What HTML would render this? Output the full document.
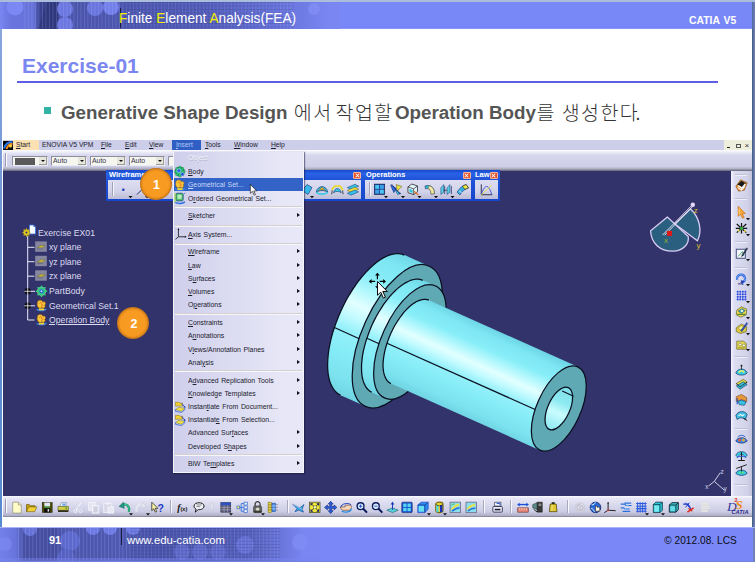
<!DOCTYPE html>
<html lang="ko">
<head>
<meta charset="utf-8">
<title>Exercise-01</title>
<style>
*{box-sizing:border-box;margin:0;padding:0}
html,body{width:755px;height:562px;overflow:hidden;background:#fff}
body{position:relative;font-family:"Liberation Sans","Noto Sans CJK KR",sans-serif}
.abs{position:absolute}
.t{white-space:nowrap}
#topstrip{left:0;top:0;width:755px;height:2px;background:#abbddc}
#hdr{left:0;top:2px;width:755px;height:27px;background:linear-gradient(#7988f7 24px,#7482f4 26px,#a0aaf8);overflow:hidden}
#hdrtxt{left:118.5px;top:9.7px;font-size:14.6px;color:#fff;line-height:16px;transform:scaleX(.937);transform-origin:0 50%}
#hdrtxt b{font-weight:normal;color:#f4f000}
#hdrbar{left:120px;top:8px;width:1px;height:20px;background:#1a1a40}
#catia5{left:689px;top:15.1px;font-size:10.4px;font-weight:bold;color:#fff;line-height:12px;word-spacing:1px}
#lstrip{left:0;top:0;width:2px;height:562px;background:linear-gradient(#a9b8d8 29px,#88a6dc 30px,#7a9cd8 140px,#6090d2 300px,#588ad0 527px,#7a8ad8 528px)}
#rstrip{left:752px;top:29px;width:3px;height:499px;background:linear-gradient(90deg,#465a8a,#5c74a0 60%,#7890b8)}
#rstrip2{left:753px;top:528px;width:2px;height:34px;background:#7080b8}
#rstrip3{left:752px;top:2px;width:3px;height:27px;background:linear-gradient(90deg,#5468a0,#6c82b4)}
#bstrip{left:0;top:560.5px;width:755px;height:1.5px;background:#7082da}
#title{left:22px;top:54px;font-size:21px;font-weight:bold;color:#7b86f0;line-height:24px}
#rule{left:17px;top:80.5px;width:701px;height:2px;background:#5d5de6}
#bullet{left:44px;top:107px;width:7px;height:7px;background:#33b3a6}
.l1{top:100.6px;font-size:18.8px;color:#3a3a3a;line-height:24px}
.l1 b{color:#555}
.ko{font-weight:300;color:#333;font-size:19.5px;letter-spacing:1.45px}
#ftr{left:0;top:527px;width:755px;height:35px;background:linear-gradient(#c4caf8,#7988f6 1.5px,#7988f6);overflow:hidden}
#pg{left:49px;top:534px;font-size:11px;font-weight:bold;color:#fff;line-height:13px}
#ftrbar{left:121px;top:528px;width:1px;height:17px;background:#1a1a40}
#url{left:127px;top:533.5px;font-size:11.3px;color:#fff;line-height:13px}
#copy{left:664.2px;top:535.4px;font-size:10.1px;color:#0c0c14;line-height:11px;letter-spacing:.05px}
</style>
<style>
/* CATIA window */
#vp{left:3px;top:171px;width:749px;height:325px;background:#33336b}
#mbar{left:3px;top:140px;width:749px;height:10px;background:#cdcee9}
#tbar{left:3px;top:150px;width:749px;height:21px;background:linear-gradient(#fdfdff,#ededf9 10%,#d6d6ed 26%,#cfcfe8 78%,#b4b4c8 88%,#8a8a9c 95%,#60607a)}
.mi{top:140px;height:10px;line-height:10px;font-size:7.8px;color:#1c1c2c;transform:scaleX(.86);transform-origin:0 50%}
.mi u{text-decoration-thickness:1px;text-underline-offset:0.5px}
#start{left:13px;top:140px;width:26px;height:10px;background:#fbe0b2}
#ins{left:172px;top:140px;width:29px;height:10px;background:#2f5fc4}
#logo{left:3px;top:141px;width:10px;height:9px;background:#05050c;overflow:hidden}
</style>
<style>
#menu{left:173px;top:151px;width:131px;height:322px;background:linear-gradient(90deg,#cfcfec,#dcdcf2 45%,#e7e7f7 85%);border:1px solid #f4f4fb;border-top-color:#e4e4f4;box-shadow:1px 1px 1px rgba(20,20,60,.5)}
#mhl{left:174px;top:178px;width:129px;height:13px;background:#3363c6}
.msep{left:175px;width:127px;height:2px;background:linear-gradient(#d4d0cc 50%,#f6f6fc 50%)}
.mt{left:187.6px;height:13px;line-height:13px;font-size:8px;color:#20202c;transform:scaleX(.858);transform-origin:0 50%;word-spacing:.8px}
.mt u{text-decoration-thickness:1px;text-underline-offset:0.5px}
.mt.hl{color:#c9d6f6}
.mt.dis{color:#f3f3fa;text-shadow:0.5px 0.5px 0 #b4b4cc}
.marr{left:297px;width:0;height:0;border-left:3px solid #101018;border-top:2.5px solid transparent;border-bottom:2.5px solid transparent}
</style>
<style>
.cb{top:156px;height:10px;background:#f6f6f0;border:1px solid #8e8e9c;border-right-color:#e8e8f0;border-bottom-color:#ececf4}
.cbb{top:157px;width:8px;height:8px;background:#e6e6dc;border-right:1px solid #9c9c94;border-bottom:1px solid #9c9c94}
.cbb:after{content:"";position:absolute;left:2px;top:3px;border-top:2.5px solid #111;border-left:2px solid transparent;border-right:2px solid transparent}
.cbt{top:156px;height:10px;line-height:10px;font-size:7.8px;color:#33334a;transform:scaleX(.88);transform-origin:0 50%}
.ftb{top:170px;height:31px;background:linear-gradient(#1748cf,#2a62e6 12%,#1f53d8 30%,#1646cc)}
.fbody{top:180px;height:19px;background:linear-gradient(#dedef2,#d2d2ea 60%,#bcbcd6)}
.ftt{top:170px;height:10px;line-height:10px;font-size:8px;font-weight:bold;color:#fff;transform:scaleX(.93);transform-origin:0 50%}
.fx{top:172px;width:8px;height:7px;background:#e2532c;border:1px solid #f6b49c;border-radius:1px}
.fx:before,.fx:after{content:"";position:absolute;left:0.5px;top:2px;width:5px;height:1px;background:#fff;transform:rotate(45deg)}
.fx:after{transform:rotate(-45deg)}
.tr{left:49px;height:12px;line-height:12px;font-size:9.3px;color:#dcdcf0;transform:scaleX(.935);transform-origin:0 50%}
.num{width:32px;height:32px;border-radius:50%;background:radial-gradient(circle closest-side,#f89c24 0,#f79a22 80%,#e68c1c 88%,#cc7a18 96%,#b86e1a 100%);color:#fff;font-weight:bold;font-size:12.5px;line-height:35.4px;text-align:center;padding-left:2px}
</style>
</head>
<body>
<div class="abs" id="topstrip"></div>
<div class="abs" id="hdr"></div>
<div class="abs" id="lstrip"></div>
<div class="abs" id="rstrip"></div>
<div class="abs" id="ftr"></div>
<svg class="abs" style="left:0;top:2px" width="340" height="27" viewBox="0 0 340 27">
<defs>
<linearGradient id="hg" x1="0" x2="1" y1="0" y2="0">
<stop offset="0" stop-color="#7a86f2"/><stop offset=".03" stop-color="#6a76de"/><stop offset=".10" stop-color="#6672d8"/><stop offset=".115" stop-color="#3a4492"/><stop offset=".165" stop-color="#343c84"/><stop offset=".18" stop-color="#4a54a8"/><stop offset=".35" stop-color="#4c56ae"/><stop offset=".6" stop-color="#525cb8"/><stop offset=".8" stop-color="#6470d6"/><stop offset=".97" stop-color="#7a86f2"/>
</linearGradient>
<pattern id="vl" width="3.5" height="27" patternUnits="userSpaceOnUse"><rect x="0" y="0" width=".7" height="27" fill="#aab4ff" opacity=".28"/></pattern>
<pattern id="gr" width="3.5" height="3.5" patternUnits="userSpaceOnUse"><rect x="0" y="0" width=".7" height="3.5" fill="#aab4ff" opacity=".22"/><rect x="0" y="0" width="3.5" height=".6" fill="#20285c" opacity=".25"/></pattern>
</defs>
<rect width="340" height="27" fill="url(#hg)"/>
<path d="M38,27 L47,0 L58,0 L58,27z" fill="#2e3678" opacity=".75"/>
<circle cx="15" cy="5" r="8.5" fill="#7c88f4"/>
<circle cx="65" cy="7" r="8" fill="#6c78e0"/><circle cx="65" cy="23" r="8" fill="#6c78e0"/>
<circle cx="95" cy="6" r="8" fill="#6a76de"/><circle cx="111" cy="5" r="8" fill="#7480ea"/>
<circle cx="314" cy="7" r="6" fill="#8490f6" opacity=".7"/>
<rect x="24" y="0" width="100" height="27" fill="url(#vl)"/>
<rect x="124" y="0" width="170" height="27" fill="url(#gr)"/>
</svg>
<svg class="abs" style="left:0;top:528px" width="320" height="34" viewBox="0 0 320 34">
<defs>
<linearGradient id="fg" x1="0" x2="1" y1="0" y2="0">
<stop offset="0" stop-color="#7480ea"/><stop offset=".05" stop-color="#6874dc"/><stop offset=".075" stop-color="#464fa2"/><stop offset=".17" stop-color="#444c9e"/><stop offset=".2" stop-color="#4e58b0"/><stop offset=".27" stop-color="#4c56ac"/><stop offset=".38" stop-color="#4e58b0"/><stop offset=".5" stop-color="#4a54aa"/><stop offset=".78" stop-color="#5560bc"/><stop offset=".95" stop-color="#7a86f2"/>
</linearGradient>
<pattern id="vl2" width="3.6" height="34" patternUnits="userSpaceOnUse"><rect x="0" y="0" width=".7" height="34" fill="#b4beff" opacity=".3"/></pattern>
<pattern id="gr2" width="3.6" height="3.2" patternUnits="userSpaceOnUse"><rect x="0" y="0" width=".7" height="3.2" fill="#b4beff" opacity=".22"/><rect x="0" y="0" width="3.6" height=".6" fill="#20285c" opacity=".28"/></pattern>
</defs>
<rect width="320" height="34" fill="url(#fg)"/>
<circle cx="5" cy="16" r="7" fill="#7a86f0" opacity=".8"/>
<circle cx="70" cy="13" r="10" fill="#5c68cc"/><circle cx="66" cy="30" r="9" fill="#5560c0"/>
<circle cx="93" cy="0" r="7" fill="#6e7ae4"/><circle cx="110" cy="0" r="7" fill="#6e7ae4"/><circle cx="133" cy="0" r="7" fill="#6e7ae4"/>
<circle cx="30" cy="1" r="7" fill="#6e7ae4" opacity=".8"/>
<circle cx="182" cy="24" r="8" fill="#6672d6" opacity=".7"/><circle cx="200" cy="24" r="8" fill="#6672d6" opacity=".7"/><circle cx="218" cy="24" r="8" fill="#6672d6" opacity=".7"/>
<circle cx="245" cy="17" r="9" fill="#6a76dc" opacity=".8"/><circle cx="300" cy="14" r="8" fill="#8490f6" opacity=".6"/>
<rect x="18" y="0" width="112" height="34" fill="url(#vl2)"/>
<rect x="130" y="0" width="150" height="34" fill="url(#gr2)"/>
<rect x="0" y="30" width="320" height="4" fill="#7a86f2" opacity=".45"/>
</svg>
<div class="abs" id="hdrbar"></div>
<div class="abs t" id="hdrtxt"><b>F</b>inite <b>E</b>lement <b>A</b>nalysis(FEA)</div>
<div class="abs t" id="catia5">CATIA V5</div>
<div class="abs t" id="title">Exercise-01</div>
<div class="abs" id="rule"></div>
<div class="abs" id="bullet"></div>
<div class="abs t l1" id="la" style="left:61px"><b>Generative Shape Design</b></div>
<div class="abs t l1 ko" id="lb" style="left:293.8px">에서</div>
<div class="abs t l1 ko" id="lc" style="left:335.6px">작업할</div>
<div class="abs t l1" id="ld" style="left:395px"><b>Operation Body</b></div>
<div class="abs t l1 ko" id="le" style="left:536.6px;word-spacing:-1.2px">를 생성한<span style="letter-spacing:-2.6px">다</span>.</div>
<div class="abs" id="ftrbar"></div>
<div class="abs t" id="pg">91</div>
<div class="abs t" id="url">www.edu-catia.com</div>
<div class="abs t" id="copy">© 2012.08. LCS</div>
<div class="abs" id="rstrip2"></div>
<div class="abs" id="bstrip"></div>
<div class="abs" id="rstrip3"></div>
<div class="abs" id="vp"></div>
<div class="abs" id="mbar"></div>
<div class="abs" id="tbar"></div>
<div class="abs" id="logo"></div>
<div class="abs" id="start"></div>
<div class="abs" id="ins"></div>
<div class="abs t mi" style="left:16px"><u>S</u>tart</div>
<div class="abs t mi" style="left:42px">ENOVIA V5 VPM</div>
<div class="abs t mi" style="left:101px"><u>F</u>ile</div>
<div class="abs t mi" style="left:125px"><u>E</u>dit</div>
<div class="abs t mi" style="left:149px"><u>V</u>iew</div>
<div class="abs t mi" style="left:176px;color:#b9c9f4"><u>I</u>nsert</div>
<div class="abs t mi" style="left:205px"><u>T</u>ools</div>
<div class="abs t mi" style="left:234px"><u>W</u>indow</div>
<div class="abs t mi" style="left:271px"><u>H</u>elp</div>
<div class="abs" style="left:5px;top:153px;width:1px;height:14px;background:#9a9ab0;box-shadow:1px 0 0 #fff"></div>
<div class="abs cb" style="left:12px;width:36px"></div>
<div class="abs" style="left:15px;top:158px;width:20px;height:7px;background:#5a5a5a"></div>
<div class="abs cbb" style="left:39px"></div>
<div class="abs cb" style="left:51px;width:36px"></div><div class="abs cbb" style="left:78px"></div>
<div class="abs cb" style="left:90px;width:36px"></div><div class="abs cbb" style="left:117px"></div>
<div class="abs cb" style="left:129px;width:36px"></div><div class="abs cbb" style="left:156px"></div>
<div class="abs cb" style="left:168px;width:36px"></div>
<div class="abs t cbt" style="left:53.2px">Auto</div>
<div class="abs t cbt" style="left:92.2px">Auto</div>
<div class="abs t cbt" style="left:131.2px">Auto</div>
<div class="abs" style="left:724px;top:140px;width:28px;height:10px;background:#eeeedd"></div>
<div class="abs" style="left:727px;top:147px;width:3px;height:1px;background:#222"></div>
<div class="abs" style="left:735.5px;top:143.5px;width:5px;height:4.5px;border:.8px solid #555;border-top-width:1.4px"></div>
<div class="abs t" style="left:744.5px;top:140.5px;font-size:8px;line-height:9px;color:#333">×</div>
<div class="abs ftb" style="left:106px;width:257px"></div>
<div class="abs fbody" style="left:108px;width:253px"></div>
<div class="abs ftb" style="left:363px;width:110px"></div>
<div class="abs fbody" style="left:365px;width:106px"></div>
<div class="abs ftb" style="left:473px;width:27px"></div>
<div class="abs fbody" style="left:475px;width:23px"></div>
<div class="abs t ftt" style="left:108.6px">Wireframe</div>
<div class="abs t ftt" style="left:365.5px">Operations</div>
<div class="abs t ftt" style="left:474.7px">Law</div>
<div class="abs fx" style="left:353px"></div>
<div class="abs fx" style="left:462.5px"></div>
<div class="abs fx" style="left:489.5px"></div>
<div class="abs" style="left:112px;top:182px;width:1px;height:14px;background:#a0a0b8;box-shadow:1px 0 0 #f4f4ff"></div>
<div class="abs" style="left:369px;top:182px;width:1px;height:14px;background:#a0a0b8;box-shadow:1px 0 0 #f4f4ff"></div>
<svg class="abs" id="gfx" style="left:0;top:0" width="755" height="562" viewBox="0 0 755 562">
<style>.ol{fill:none;stroke:#0a1020;stroke-width:1.25}.ols{stroke:#0a1020;stroke-width:1.25}</style>
<defs>
<linearGradient id="g1" gradientUnits="userSpaceOnUse" x1="404.4" y1="255.1" x2="340.6" y2="395.2"><stop offset="0" stop-color="#6fd6e6"/><stop offset="0.08" stop-color="#7ce6f2"/><stop offset="0.22" stop-color="#88eef8"/><stop offset="0.32" stop-color="#b4f8fd"/><stop offset="0.42" stop-color="#e2ffff"/><stop offset="0.5" stop-color="#c4fbff"/><stop offset="0.6" stop-color="#94f0fa"/><stop offset="0.75" stop-color="#84ecf6"/><stop offset="0.9" stop-color="#7ce2ee"/><stop offset="1" stop-color="#70d4e2"/></linearGradient>
<linearGradient id="g2" gradientUnits="userSpaceOnUse" x1="422.8" y1="280.3" x2="371.8" y2="392.2"><stop offset="0" stop-color="#6fd6e6"/><stop offset="0.08" stop-color="#7ce6f2"/><stop offset="0.22" stop-color="#88eef8"/><stop offset="0.32" stop-color="#b4f8fd"/><stop offset="0.42" stop-color="#e2ffff"/><stop offset="0.5" stop-color="#c4fbff"/><stop offset="0.6" stop-color="#94f0fa"/><stop offset="0.75" stop-color="#84ecf6"/><stop offset="0.9" stop-color="#7ce2ee"/><stop offset="1" stop-color="#70d4e2"/></linearGradient>
<linearGradient id="g3" gradientUnits="userSpaceOnUse" x1="428.9" y1="300.2" x2="390.9" y2="383.6"><stop offset="0" stop-color="#6fd6e6"/><stop offset="0.08" stop-color="#7ce6f2"/><stop offset="0.22" stop-color="#88eef8"/><stop offset="0.32" stop-color="#b4f8fd"/><stop offset="0.42" stop-color="#e2ffff"/><stop offset="0.5" stop-color="#c4fbff"/><stop offset="0.6" stop-color="#94f0fa"/><stop offset="0.75" stop-color="#84ecf6"/><stop offset="0.9" stop-color="#7ce2ee"/><stop offset="1" stop-color="#70d4e2"/></linearGradient>
<linearGradient id="g4" gradientUnits="userSpaceOnUse" x1="568.3" y1="387.6" x2="549.3" y2="429.4"><stop offset="0" stop-color="#7fdfe9"/><stop offset="0.35" stop-color="#8eeaf2"/><stop offset="0.6" stop-color="#c9fcfe"/><stop offset="0.8" stop-color="#a9f3f8"/><stop offset="1" stop-color="#8eeaf2"/></linearGradient>
</defs>
<g class="part">
<path d="M340.56,395.23 A34.65,77.00 24.5 1 0 404.42,255.09 A34.65,77.00 24.5 1 0 340.56,395.23 Z" fill="url(#g1)" /><polygon points="404.4,255.1 429.3,266.2 365.4,406.3 340.6,395.2" fill="url(#g1)"/><path d="M340.6,395.2 L338.2,393.9 L336.0,392.1 L334.1,389.9 L332.4,387.4 L330.9,384.4 L329.7,381.1 L328.8,377.4 L328.1,373.4 L327.7,369.1 L327.6,364.5 L327.8,359.7 L328.2,354.7 L328.9,349.5 L329.9,344.2 L331.1,338.7 L332.6,333.1 L334.4,327.5 L336.4,321.9 L338.6,316.3 L341.0,310.8 L343.6,305.3 L346.3,300.0 L349.3,294.8 L352.4,289.8 L355.6,285.1 L358.9,280.5 L362.3,276.3 L365.8,272.4 L369.3,268.7 L372.8,265.5 L376.3,262.5 L379.8,260.0 L383.2,257.9 L386.6,256.2 L389.9,254.9 L393.1,254.1 L396.2,253.7 L399.1,253.7 L401.8,254.2 L404.4,255.1" class="ol"/>
<path d="M365.39,406.33 A34.65,77.00 24.5 1 0 429.25,266.20 A34.65,77.00 24.5 1 0 365.39,406.33 Z" fill="#5fa9b5" class="ols" />
<path d="M371.82,392.23 A27.68,61.50 24.5 1 0 422.82,280.30 A27.68,61.50 24.5 1 0 371.82,392.23 Z" fill="url(#g2)" /><polygon points="422.8,280.3 435.4,285.9 384.4,397.9 371.8,392.2" fill="url(#g2)"/><path d="M371.8,392.2 L369.9,391.2 L368.2,389.7 L366.6,388.0 L365.3,385.9 L364.1,383.6 L363.2,380.9 L362.4,378.0 L361.9,374.8 L361.6,371.4 L361.5,367.7 L361.6,363.9 L362.0,359.9 L362.5,355.7 L363.3,351.4 L364.3,347.1 L365.5,342.6 L366.9,338.2 L368.5,333.7 L370.2,329.2 L372.1,324.8 L374.2,320.4 L376.4,316.2 L378.8,312.0 L381.3,308.1 L383.8,304.2 L386.5,300.6 L389.2,297.2 L391.9,294.1 L394.7,291.2 L397.5,288.6 L400.4,286.3 L403.2,284.2 L405.9,282.6 L408.6,281.2 L411.2,280.2 L413.8,279.5 L416.2,279.2 L418.6,279.2 L420.8,279.6 L422.8,280.3" class="ol"/>
<path d="M384.41,397.86 A28.04,61.50 24.5 1 0 435.42,285.94 A28.04,61.50 24.5 1 0 384.41,397.86 Z" fill="#5fa9b5" class="ols" />
<path d="M390.92,383.58 A20.88,45.80 24.5 1 0 428.91,300.23 A20.88,45.80 24.5 1 0 390.92,383.58 Z" fill="url(#g3)" /><polygon points="428.9,300.2 577.8,366.8 539.8,450.2 390.9,383.6" fill="url(#g3)"/><path d="M390.9,383.6 L389.5,382.8 L388.2,381.7 L387.0,380.4 L386.0,378.9 L385.1,377.1 L384.4,375.1 L383.8,372.9 L383.4,370.5 L383.1,368.0 L383.0,365.2 L383.1,362.4 L383.4,359.4 L383.8,356.3 L384.4,353.1 L385.1,349.8 L386.0,346.5 L387.0,343.2 L388.2,339.9 L389.5,336.5 L390.9,333.2 L392.5,330.0 L394.1,326.8 L395.9,323.8 L397.7,320.8 L399.6,318.0 L401.6,315.3 L403.6,312.7 L405.7,310.4 L407.8,308.2 L409.9,306.3 L412.0,304.6 L414.1,303.1 L416.2,301.8 L418.2,300.8 L420.2,300.1 L422.1,299.6 L423.9,299.4 L425.7,299.4 L427.4,299.7 L428.9,300.2" class="ol"/>
<path d="M539.81,450.18 A21.75,45.80 24.5 1 0 577.79,366.82 A21.75,45.80 24.5 1 0 539.81,450.18 Z" fill="#5fa9b5" class="ols" />
<path d="M549.26,429.43 A10.92,23.00 24.5 1 0 568.34,387.57 A10.92,23.00 24.5 1 0 549.26,429.43 Z" fill="url(#g4)" class="ols" />
<path d="M334.4,327.5 L359.2,338.7" class="ol"/>
<path d="M366.9,338.2 L379.1,343.7" class="ol"/>
<path d="M387.0,343.2 L535.1,409.5" class="ol"/>
<path d="M573.6,396.2 L562.2,391" class="ol"/>
</g>
<defs><linearGradient id="rtb" x1="0" x2="1" y1="0" y2="0"><stop offset="0" stop-color="#f4f4fc"/><stop offset=".15" stop-color="#dedef2"/><stop offset=".8" stop-color="#d0d0e8"/><stop offset="1" stop-color="#c2c2dc"/></linearGradient><linearGradient id="btb" x1="0" x2="0" y1="0" y2="1"><stop offset="0" stop-color="#fafaff"/><stop offset=".12" stop-color="#e6e6f6"/><stop offset=".75" stop-color="#ccccE4"/><stop offset=".93" stop-color="#b0b0c8"/><stop offset="1" stop-color="#77778c"/></linearGradient></defs>
<rect x="731.0" y="171.0" width="21.0" height="326.0" fill="url(#rtb)" />
<rect x="3.0" y="496.0" width="749.0" height="21.0" fill="url(#btb)" />
<rect x="735.0" y="174.0" width="12.0" height="1.0" fill="#c0c0d8" /><rect x="735.0" y="175.0" width="12.0" height="1.0" fill="#efeffa" />
<rect x="735.0" y="198.0" width="12.0" height="1.0" fill="#c0c0d8" /><rect x="735.0" y="199.0" width="12.0" height="1.0" fill="#efeffa" />
<rect x="735.0" y="241.0" width="12.0" height="1.0" fill="#c0c0d8" /><rect x="735.0" y="242.0" width="12.0" height="1.0" fill="#efeffa" />
<rect x="735.0" y="267.0" width="12.0" height="1.0" fill="#c0c0d8" /><rect x="735.0" y="268.0" width="12.0" height="1.0" fill="#efeffa" />
<rect x="735.0" y="356.0" width="12.0" height="1.0" fill="#c0c0d8" /><rect x="735.0" y="357.0" width="12.0" height="1.0" fill="#efeffa" />
<rect x="735.0" y="428.0" width="12.0" height="1.0" fill="#c0c0d8" /><rect x="735.0" y="429.0" width="12.0" height="1.0" fill="#efeffa" />
<rect x="735.0" y="484.0" width="12.0" height="1.0" fill="#c0c0d8" /><rect x="735.0" y="485.0" width="12.0" height="1.0" fill="#efeffa" />
<g transform="translate(741.5 185.5) scale(0.95)"><path d="M-6,1 L-1,-6 L6,-3 L3,5 L-3,6z" fill="#e89030" stroke="#5a3000" stroke-width="0.5" /><path d="M-4.5,-1 L0,-5 L4.5,-2.5 L1,2z" fill="#1a1a1a" /><path d="M-3.5,0 L0.5,2.8 L4,-1.5" fill="none" stroke="#f4f4f4" stroke-width="1.6" /><path d="M-4,2 L0,5 L3.5,1" fill="none" stroke="#f8f8f8" stroke-width="1.2" /></g>
<g transform="translate(741.5 212.5) scale(0.95)"><path d="M-3.5,-6.5 L-3.5,4 L-1,1.8 L1,6 L2.8,5.2 L0.8,1.2 L4,1z" fill="#f8a838" stroke="#c86a10" stroke-width="0.7" /><path d="M-2.5,-4 v6" fill="none" stroke="#fde0a0" stroke-width="0.8" /></g>
<g transform="translate(741.5 228.8) scale(0.95)"><path d="M-5,-5 L5,4 M5,-5 L-5,4 M0,-6 V5 M-6,-0.5 H6" fill="none" stroke="#111" stroke-width="1.3" /><circle cx="0.0" cy="-0.5" r="1.7" fill="#38b838" /><circle cx="-3.0" cy="2.0" r="1.0" fill="#e8e030" /><circle cx="3.5" cy="2.5" r="1.0" fill="#e8e030" /></g>
<g transform="translate(741.5 253.5) scale(0.95)"><rect x="-5.5" y="-4.5" width="9.5" height="9.5" fill="#f4f4fc" stroke="#3a4a7a" stroke-width="1"/><path d="M-3.5,3 L1,-2 L2.5,2.5" fill="none" stroke="#3a9a5a" stroke-width="0.9" /><path d="M5.5,-6 L0.5,1.5 L0,3.2 L1.6,2.3 L6.5,-5.2z" fill="#2a3a6a" stroke="#111" stroke-width="0.4" /></g>
<g transform="translate(741.5 278.3) scale(0.95)"><path d="M-4.5,1.5 a4.2,4.2 0 1 1 6,2.5" fill="none" stroke="#2a60d8" stroke-width="2.4" /><path d="M-4.5,1.5 a4.2,4.2 0 1 1 6,2.5" fill="none" stroke="#8ac0ff" stroke-width="0.8" /><path d="M-1,2 l4,0.8 l-2.5,3z" fill="#1a3ab8" /><text x="-4" y="7" font-family="Liberation Sans,sans-serif" font-size="4.5" font-weight="bold" fill="#1a2a8a">×N</text></g>
<g transform="translate(741.5 295.5) scale(0.95)"><circle cx="-4.0" cy="-4.0" r="1.1" fill="#2a4ae0" /><circle cx="-4.0" cy="-1.3" r="1.1" fill="#2a4ae0" /><circle cx="-4.0" cy="1.4" r="1.1" fill="#2a4ae0" /><circle cx="-4.0" cy="4.1" r="1.1" fill="#2a4ae0" /><circle cx="-1.3" cy="-4.0" r="1.1" fill="#2a4ae0" /><circle cx="-1.3" cy="-1.3" r="1.1" fill="#2a4ae0" /><circle cx="-1.3" cy="1.4" r="1.1" fill="#2a4ae0" /><circle cx="-1.3" cy="4.1" r="1.1" fill="#2a4ae0" /><circle cx="1.4" cy="-4.0" r="1.1" fill="#2a4ae0" /><circle cx="1.4" cy="-1.3" r="1.1" fill="#2a4ae0" /><circle cx="1.4" cy="1.4" r="1.1" fill="#2a4ae0" /><circle cx="1.4" cy="4.1" r="1.1" fill="#2a4ae0" /><circle cx="4.1" cy="-4.0" r="1.1" fill="#2a4ae0" /><circle cx="4.1" cy="-1.3" r="1.1" fill="#2a4ae0" /><circle cx="4.1" cy="1.4" r="1.1" fill="#2a4ae0" /><circle cx="4.1" cy="4.1" r="1.1" fill="#2a4ae0" /></g>
<g transform="translate(741.5 312.0) scale(0.95)"><path d="M-5,-2 L0,-5.5 L5.5,-3 L5,3 L-1,5.5 L-5.5,3z" fill="#e8d850" stroke="#4a4a10" stroke-width="0.6" /><path d="M-3.5,-1 L0.5,-3.5 L4,-1.5 L0,1.5z" fill="#38a8c8" stroke="#1a3a5a" stroke-width="0.5" /><path d="M-4.5,2.5 h9" fill="none" stroke="#5a8a3a" stroke-width="1.3" /><circle cx="0.5" cy="-1.2" r="1.3" fill="#f8f8d0" /></g>
<g transform="translate(741.5 327.8) scale(0.95)"><path d="M-5.5,0 L0,-4 L5.5,-1 L5,4 L-1,6 L-5.5,4z" fill="#e0cc40" stroke="#4a4a10" stroke-width="0.6" /><path d="M-4,0.5 L0,-2.2 L4,0 L0,2.6z" fill="#f4f098" stroke="#6a6a20" stroke-width="0.4" /><path d="M-1,3 L5.5,-5.5 L6.5,-4.5 L0.5,4z" fill="#2a50c8" stroke="#0a1a5a" stroke-width="0.4" /></g>
<g transform="translate(741.5 344.0) scale(0.95)"><path d="M-5,-3 h7 l3,2.5 v6 h-10z" fill="#e8d850" stroke="#4a4a10" stroke-width="0.6" /><circle cx="-1.5" cy="0.5" r="1.5" fill="#f8f8e8" stroke="#5a5a2a" stroke-width=".5"/><circle cx="2.5" cy="1.5" r="1.5" fill="#f8f8e8" stroke="#5a5a2a" stroke-width=".5"/><path d="M-3.5,4 h7" fill="none" stroke="#8a8a30" stroke-width="0.8" /></g>
<g transform="translate(741.5 370.6) scale(0.95)"><path d="M-6,2.5 C-4,-3 4,-3 6,2.5 C3,5.5 -3,5.5 -6,2.5z" fill="#38c8e0" stroke="#0a2a6a" stroke-width="0.7" /><path d="M-3,2 C-1,-0.5 1,-0.5 3,2" fill="none" stroke="#e8f060" stroke-width="1.4" /><path d="M0,-1 V-6" fill="none" stroke="#1a1a1a" stroke-width="0.8" /><path d="M-1.5,-4.5 L0,-6.5 L1.5,-4.5z" fill="#1a1a1a" /></g>
<g transform="translate(741.5 384.5) scale(0.95)"><path d="M-5.5,-1 L2,-5.5 L6,-2.5 L-1.5,2.5z" fill="#e8e040" stroke="#3a3a10" stroke-width="0.6" /><path d="M-5.5,1.5 L2,-3 L6,0 L-1.5,5z" fill="#38b8d8" stroke="#0a2a5a" stroke-width="0.6" /><path d="M-5.5,-1 L-1.5,2.5 L6,-2.5" fill="none" stroke="#1a1a1a" stroke-width="0.7" /></g>
<g transform="translate(741.5 399.6) scale(0.95)"><path d="M-5.5,-3 L0,-5.5 L5.5,-2 L5.5,2 L0,0 L-5.5,2z" fill="#e89838" stroke="#6a3a0a" stroke-width="0.6" /><path d="M-4,2 L0,0.5 L5,2.5 L3,6 L-2,5.5z" fill="#38c0e0" stroke="#0a2a6a" stroke-width="0.6" /><path d="M-4.5,-1.5 V5" fill="none" stroke="#2a50c8" stroke-width="1.2" /></g>
<g transform="translate(741.5 415.3) scale(0.95)"><path d="M-6,0 C-3,-5 3,-5 6,-1 L4,4.5 C1,2 -2,2 -4.5,4.5z" fill="#40c0e0" stroke="#0a2a6a" stroke-width="0.7" /><path d="M-3,0.5 l2,-1.5 l2,1.5 l2,-1.5" fill="none" stroke="#f8f8f8" stroke-width="1.1" /><path d="M2,3 L6,5.5" fill="none" stroke="#1a1a1a" stroke-width="1" /></g>
<g transform="translate(741.5 440.0) scale(0.95)"><path d="M-6,1 C-4,-3.5 4,-3.5 6,1 C3,4 -3,4 -6,1z" fill="#3a90e8" stroke="#0a1a6a" stroke-width="0.7" /><circle cx="-2.0" cy="0.0" r="1.6" fill="#e85838" /><circle cx="2.0" cy="0.0" r="1.6" fill="#e8a838" /><path d="M-4,-3 C-2,-5.5 2,-5.5 4,-3" fill="none" stroke="#1a50c8" stroke-width="1" /></g>
<g transform="translate(741.5 455.2) scale(0.95)"><path d="M-6,0 C-4,-5 4,-5 6,0 L4,2 C2,-1.5 -2,-1.5 -4,2z" fill="#38d0e0" stroke="#0a2a6a" stroke-width="0.7" /><path d="M0,-3 V6 M-3.5,5.5 h7" fill="none" stroke="#1a1a1a" stroke-width="1.1" /><path d="M-5,2.5 C-3,0.5 3,0.5 5,2.5" fill="none" stroke="#2a60d8" stroke-width="1.1" /></g>
<g transform="translate(741.5 470.4) scale(0.95)"><path d="M-6,3 C-4,-1.5 4,-1.5 6,3 C3,6 -3,6 -6,3z" fill="#38c8e0" stroke="#0a2a6a" stroke-width="0.7" /><path d="M-5.5,-2 L5.5,-6" fill="none" stroke="#1a1a1a" stroke-width="1" /><path d="M0,-4 V3" fill="none" stroke="#1a1a1a" stroke-width="0.9" /><path d="M-2.5,3 C-1,1.5 1,1.5 2.5,3" fill="none" stroke="#60e878" stroke-width="1.2" /></g>
<path d="M746.0,218.0 h4 l-2,2.2z" fill="#111" />
<path d="M746.0,234.0 h4 l-2,2.2z" fill="#111" />
<path d="M746.0,259.0 h4 l-2,2.2z" fill="#111" />
<path d="M746.0,284.0 h4 l-2,2.2z" fill="#111" />
<path d="M746.0,301.0 h4 l-2,2.2z" fill="#111" />
<path d="M746.0,317.0 h4 l-2,2.2z" fill="#111" />
<path d="M746.0,333.0 h4 l-2,2.2z" fill="#111" />
<path d="M746.0,349.0 h4 l-2,2.2z" fill="#111" />
<rect x="5.0" y="499.0" width="1.0" height="14.0" fill="#9a9ab0" /><rect x="6.0" y="499.0" width="1.0" height="14.0" fill="#ffffff" />
<g transform="translate(17.0 507.4) scale(0.95)"><path d="M-4.5,-5.5 h6 l3,3 v8.5 h-9z" fill="#fffcc8" stroke="#8a8a78" stroke-width="0.7" /><path d="M1.5,-5.5 v3 h3" fill="#e8e4b0" stroke="#8a8a78" stroke-width="0.6" /></g>
<g transform="translate(31.7 507.4) scale(0.95)"><path d="M-5.5,4.5 v-7.5 h3 l1,1.2 h5 v2" fill="#c8a010" stroke="#5a4800" stroke-width="0.6" /><path d="M-5.5,4.5 l2.2,-5 h8.8 l-2.5,5z" fill="#f2d23a" stroke="#6a5400" stroke-width="0.6" /></g>
<g transform="translate(47.2 507.4) scale(0.95)"><rect x="-5.2" y="-5.0" width="10.4" height="10.2" fill="#4e4e08" stroke="#1a1a00" stroke-width=".6"/><rect x="-3.0" y="-5.0" width="6.0" height="4.0" fill="#dfe9f4" /><rect x="-3.2" y="1.0" width="6.4" height="4.2" fill="#0a0a0a" /><rect x="0.4" y="1.8" width="1.6" height="2.6" fill="#e8e8e8" /><rect x="-3.0" y="-0.6" width="6.0" height="1.2" fill="#3c9a3c" /></g>
<g transform="translate(63.2 507.4) scale(0.95)"><path d="M-3.5,-1 l1.5,-4 h5.5 l-1,4z" fill="#e8f4ff" stroke="#5a6a8a" stroke-width="0.5" /><rect x="-0.8" y="-4.0" width="3.0" height="2.0" fill="#5aa0e8" /><path d="M-5.5,-1 h11 v4 h-11z" fill="#d2d048" stroke="#55551a" stroke-width="0.6" /><rect x="-5.5" y="3.0" width="11.0" height="1.8" fill="#2a2a14" /><rect x="2.2" y="0.2" width="2.0" height="1.2" fill="#2e8a2e" /></g>
<g transform="translate(78.0 507.4) scale(0.95)"><path d="M-3,-5 L2,3 M3,-5 L-2,3" fill="none" stroke="#f2f2fa" stroke-width="1.3" /><circle cx="-2.6" cy="4.0" r="1.5" fill="none" stroke="#f2f2fa" stroke-width="1"/><circle cx="2.6" cy="4.0" r="1.5" fill="none" stroke="#f2f2fa" stroke-width="1"/><path d="M-2.4,-4.4 L2.6,3.6" fill="none" stroke="#a8a8c0" stroke-width="0.5" /></g>
<g transform="translate(93.5 507.4) scale(0.95)"><rect x="-5.0" y="-5.0" width="6.5" height="8.0" fill="#e4e4f0" stroke="#f8f8ff" stroke-width=".8"/><rect x="-1.0" y="-2.0" width="6.5" height="8.0" fill="#dcdcea" stroke="#f8f8ff" stroke-width=".8"/><path d="M0.5,0.5h3.5M0.5,2.5h3.5M0.5,4.5h3.5" fill="none" stroke="#b0b0c8" stroke-width="0.5" /></g>
<g transform="translate(108.5 507.4) scale(0.95)"><rect x="-5.0" y="-4.0" width="8.5" height="9.5" fill="#d8d8e6" stroke="#f4f4ff" stroke-width=".8"/><rect x="-2.5" y="-5.5" width="3.5" height="2.5" fill="#f0f0fa" /><rect x="-0.5" y="-0.5" width="6.0" height="6.5" fill="#e8e8f2" stroke="#f8f8ff" stroke-width=".7"/></g>
<g transform="translate(124.5 507.4) scale(0.95)"><path d="M4.5,4.5 C6,-1 2,-4.5 -2.5,-2.5" fill="none" stroke="#1a8a4a" stroke-width="2.4" /><path d="M4.5,4.5 C6,-1 2,-4.5 -2.5,-2.5" fill="none" stroke="#35c8a8" stroke-width="1.2" /><path d="M-5.8,-1 L-1,-5.5 L-0.2,1z" fill="#1e9a7a" stroke="#0a5a6a" stroke-width="0.5" /></g>
<g transform="translate(141.0 507.4) scale(0.95)"><path d="M-4.5,4.5 C-6,-1 -2,-4.5 2.5,-2.5" fill="none" stroke="#e6e6f0" stroke-width="2.2" /><path d="M5.8,-1 L1,-5.5 L0.2,1z" fill="#e6e6f0" stroke="#c4c4d8" stroke-width="0.5" /></g>
<g transform="translate(157.0 507.4) scale(0.95)"><path d="M-5.5,-5.5 L-5.5,3.5 L-3.3,1.5 L-1.8,5 L-0.3,4.3 L-1.8,1 L1,1z" fill="#f4f0a0" stroke="#111" stroke-width="0.7" /><text x="0.6" y="4.6" font-family="Liberation Sans,sans-serif" font-size="11" font-weight="bold" fill="#1a3ac8">?</text></g>
<g transform="translate(183.0 507.4) scale(0.95)"><text x="-6" y="3.4" font-family="Liberation Serif,serif" font-size="10" font-style="italic" font-weight="bold" fill="#101010">f</text><text x="-2.6" y="3.4" font-family="Liberation Sans,sans-serif" font-size="5.8" font-weight="bold" fill="#101010">(x)</text></g>
<g transform="translate(198.8 507.4) scale(0.95)"><path d="M-5,-1.5 C-5,-6 5.5,-6 5.5,-1.5 C5.5,2 1,2.6 -0.5,2.3 L-3.8,5 L-2.8,1.8 C-4.5,1 -5,0 -5,-1.5z" fill="#f4f4fc" stroke="#111" stroke-width="1" /><path d="M-2.5,-2.6 h5.5 M-2.5,-0.8 h4" fill="none" stroke="#555" stroke-width="0.7" /></g>
<g transform="translate(211.5 507.4) scale(0.95)"><path d="M-1,-5 h2.4 v5 l-1.2,4 l-1.2,-4z" fill="#e8e8f4" stroke="#c8c8dc" stroke-width="0.6" /></g>
<g transform="translate(225.8 507.4) scale(0.95)"><rect x="-5.2" y="-5.0" width="10.4" height="10.0" fill="#5a5a78" stroke="#22223a" stroke-width=".6"/><rect x="-5.2" y="-5.0" width="10.4" height="2.6" fill="#2a50c8" /><path d="M-5.2,0h10.4M-5.2,2.5h10.4M-1.8,-2.4v7.4M1.7,-2.4v7.4" fill="none" stroke="#c8c8dc" stroke-width="0.5" /></g>
<g transform="translate(242.6 507.4) scale(0.95)"><path d="M-4.5,0 h3 M-1.5,-4 v8 M-1.5,-4 h3 M-1.5,0 h3 M-1.5,4 h3" fill="none" stroke="#2a70d8" stroke-width="0.9" /><rect x="1.5" y="-5.5" width="3.4" height="3.0" fill="#f0f4ff" stroke="#2a60c8" stroke-width=".7"/><rect x="1.5" y="-1.5" width="3.4" height="3.0" fill="#f0f4ff" stroke="#2a60c8" stroke-width=".7"/><rect x="1.5" y="2.5" width="3.4" height="3.0" fill="#f0f4ff" stroke="#2a60c8" stroke-width=".7"/><rect x="-6.0" y="-1.5" width="3.0" height="3.0" fill="#f0e070" stroke="#2a60c8" stroke-width=".6"/></g>
<g transform="translate(257.6 507.4) scale(0.95)"><path d="M-2.6,-1.5 v-2 a2.6,2.6 0 0 1 5.2,0 v2" fill="none" stroke="#3a3a3a" stroke-width="1.3" /><rect x="-4.2" y="-1.5" width="8.4" height="7.0" fill="#6a6a64" stroke="#222" stroke-width=".6" rx="1.5"/><circle cx="0.0" cy="2.0" r="1.8" fill="#d8d8c8" /><rect x="-4.2" y="3.5" width="8.4" height="2.0" fill="#3a3a34" /></g>
<g transform="translate(272.8 507.4) scale(0.95)"><rect x="-5.0" y="-5.5" width="3.6" height="11.0" fill="#e8d040" stroke="#6a6a2a" stroke-width=".5"/><path d="M-5,-2.7h3.6M-5,0h3.6M-5,2.7h3.6" fill="none" stroke="#4a4a2a" stroke-width="0.5" /><rect x="-0.8" y="-4.5" width="3.6" height="9.0" fill="#4a90e8" stroke="#1a3a8a" stroke-width=".5"/><path d="M-0.8,-1.5h3.6M-0.8,1.5h3.6" fill="none" stroke="#e8f0ff" stroke-width="0.6" /><path d="M3.6,-3h1.6M3.6,0h1.6M3.6,3h1.6" fill="none" stroke="#555" stroke-width="0.6" /></g>
<g transform="translate(298.3 507.4) scale(0.95)"><path d="M-6,-3.5 L1.5,0.5 L6,-3 L4,2 L5.5,5 L0.5,3 L-3.5,4.5 L-1.5,1.2z" fill="#3aa8e8" stroke="#0a3a8a" stroke-width="0.6" /><path d="M-6,-3.5 L1.5,0.5 L4,2" fill="none" stroke="#c8ecff" stroke-width="0.6" /></g>
<g transform="translate(314.8 507.4) scale(0.95)"><rect x="-5.5" y="-5.5" width="11.0" height="11.0" fill="#f0e838" stroke="#3a3a1a" stroke-width=".7"/><path d="M-4.5,-4.5 l3,0 l-3,3z M4.5,-4.5 l-3,0 l3,3z M-4.5,4.5 l3,0 l-3,-3z M4.5,4.5 l-3,0 l3,-3z" fill="#1a1a6a" /><path d="M-4,-4L4,4M4,-4L-4,4" fill="none" stroke="#1a1a6a" stroke-width="0.8" /><rect x="-1.5" y="-1.5" width="3.0" height="3.0" fill="#f8f8b0" stroke="#3a3a1a" stroke-width=".4"/></g>
<g transform="translate(330.7 507.4) scale(0.95)"><path d="M0,-6.5 l2.6,3 h-1.6 v2.5 h2.5 v-1.6 l3,2.6 l-3,2.6 v-1.6 h-2.5 v2.5 h1.6 l-2.6,3 l-2.6,-3 h1.6 v-2.5 h-2.5 v1.6 l-3,-2.6 l3,-2.6 v1.6 h2.5 v-2.5 h-1.6z" fill="#2a60e0" stroke="#0a1a6a" stroke-width="0.6" /></g>
<g transform="translate(346.0 507.4) scale(0.95)"><path d="M-5.5,0 C-5.5,-4 3,-5.5 5.5,-2.5" fill="none" stroke="#1a3ab8" stroke-width="1" /><path d="M-5.8,-0.5 h5 v-1.8 h5.5 c1.5,0 1.5,4.8 -1.5,5.3 h-5.5 c-2,0 -3.5,-1.5 -3.5,-3.5z" fill="#f6d8b8" stroke="#5a2a1a" stroke-width="0.6" /><path d="M5.5,1.5 C5.5,5 -1,6 -4.5,4" fill="none" stroke="#2a90e0" stroke-width="1.4" /></g>
<g transform="translate(361.8 507.4) scale(0.95)"><circle cx="-1.3" cy="-1.3" r="3.6" fill="#d8ecff" stroke="#0a1a5a" stroke-width="1.4"/><path d="M1.5,1.5 L5.5,5.5" fill="none" stroke="#0a1a5a" stroke-width="2.2" /><path d="M-3,-1.3h3.4M-1.3,-3v3.4" fill="none" stroke="#1a3ab8" stroke-width="0.9" /></g>
<g transform="translate(377.1 507.4) scale(0.95)"><circle cx="-1.3" cy="-1.3" r="3.6" fill="#d8ecff" stroke="#0a1a5a" stroke-width="1.4"/><path d="M1.5,1.5 L5.5,5.5" fill="none" stroke="#0a1a5a" stroke-width="2.2" /><path d="M-3,-1.3h3.4" fill="none" stroke="#1a3ab8" stroke-width="0.9" /></g>
<g transform="translate(392.5 507.4) scale(0.95)"><path d="M-6,3 L0,0.5 L6,3 L0,5.5z" fill="#58d0d8" stroke="#0a5a6a" stroke-width="0.6" /><path d="M0,2.5 V-5.5" fill="none" stroke="#1a3ab8" stroke-width="1.1" /><path d="M-2,-3 L0,-6 L2,-3z" fill="#1a3ab8" /></g>
<g transform="translate(407.0 507.4) scale(0.95)"><rect x="-5.5" y="-5.5" width="11.0" height="11.0" fill="#1a50d0" stroke="#0a1a5a" stroke-width=".6" rx="1"/><rect x="-4.0" y="-4.0" width="3.5" height="3.5" fill="#58d8f0" /><rect x="0.5" y="-4.0" width="3.5" height="3.5" fill="#58d8f0" /><rect x="-4.0" y="0.5" width="3.5" height="3.5" fill="#58d8f0" /><rect x="0.5" y="0.5" width="3.5" height="3.5" fill="#58d8f0" /></g>
<g transform="translate(423.0 507.4) scale(0.95)"><path d="M-5.5,-2.5 L-2,-5.5 L5.5,-5.5 L5.5,2 L2,5.5 L-5.5,5.5z" fill="#2e8cf0" stroke="#1a40c8" stroke-width="0.7" /><path d="M-5.5,-2.5 H2 V5.5 M2,-2.5 L5.5,-5.5" fill="none" stroke="#0a1a6a" stroke-width="0.6" /><rect x="-4.5" y="-1.5" width="5.5" height="6.0" fill="#68e0f0" /></g>
<g transform="translate(439.4 507.4) scale(0.95)"><path d="M-3.8,-3.5 a3.8,2 0 0 1 7.6,0 v7 a3.8,2 0 0 1 -7.6,0z" fill="#e8d438" stroke="#7a6a10" stroke-width="1.2" /><rect x="-3.2" y="-2.5" width="2.2" height="7.5" fill="#48d8e8" /><rect x="0.6" y="-2.5" width="2.6" height="7.5" fill="#1a30b8" /><path d="M-3.5,-3.5 a3.5,1.8 0 0 0 7,0" fill="none" stroke="#1a1a1a" stroke-width="0.6" /></g>
<g transform="translate(455.3 507.4) scale(0.95)"><rect x="-5.5" y="-5.5" width="11.0" height="11.0" fill="#8adfee" stroke="#70708c" stroke-width=".9"/><path d="M-4,2.5 C-2,0 1,-2.5 4,-3" fill="none" stroke="#e8e048" stroke-width="2" /><path d="M-3.5,3.8 C-1,2 2,0.5 4.5,0.5" fill="none" stroke="#2a70d8" stroke-width="1.6" /><path d="M-4,-2.5 l3,-1.5" fill="none" stroke="#58c868" stroke-width="1.4" /></g>
<g transform="translate(471.2 507.4) scale(0.95)"><rect x="-5.5" y="-5.5" width="11.0" height="11.0" fill="#8adfee" stroke="#70708c" stroke-width=".9"/><path d="M-4,2 C-2,-0.5 1,-2.5 4,-2.5" fill="none" stroke="#e8e048" stroke-width="2" /><path d="M-3.5,3.6 C-1,2 2,0.8 4.5,1" fill="none" stroke="#2a70d8" stroke-width="1.5" /></g>
<g transform="translate(497.6 507.4) scale(0.95)"><rect x="-5.0" y="-1.0" width="10.0" height="6.0" fill="#e8e8f4" stroke="#1a1a3a" stroke-width=".8" rx="1"/><rect x="-3.0" y="-5.5" width="6.5" height="4.0" fill="#f8f8ff" stroke="#1a1a3a" stroke-width=".6"/><path d="M-1,-4 c2,-1 3,0 4,1" fill="none" stroke="#1a50d0" stroke-width="1.2" /><rect x="-3.0" y="1.5" width="6.0" height="1.6" fill="#1a1a3a" /></g>
<g transform="translate(523.0 507.4) scale(0.95)"><path d="M-5.5,-3 h11" fill="none" stroke="#1a50d8" stroke-width="1.4" /><path d="M-6,-3 l2.5,-2 v4z M6,-3 l-2.5,-2 v4z" fill="#1a50d8" /><rect x="-5.5" y="0.5" width="11.0" height="4.5" fill="#e88878" stroke="#5a1a1a" stroke-width=".6"/><path d="M-3.5,0.5v2M-1.2,0.5v2M1.2,0.5v2M3.5,0.5v2" fill="none" stroke="#fff" stroke-width="0.6" /></g>
<g transform="translate(538.0 507.4) scale(0.95)"><path d="M-1,-5.5 h5.5 v10.5 h-5.5z" fill="#3a3a3a" stroke="#111" stroke-width="0.5" /><path d="M-5.5,-3 L-1,-5 V2 L-5.5,0.5z" fill="#5a8a8a" stroke="#1a2a2a" stroke-width="0.5" /><rect x="0.5" y="-4.0" width="3.0" height="2.5" fill="#8a8a8a" /><path d="M-4.5,2 L-1,4.8" fill="none" stroke="#2a2a2a" stroke-width="1" /></g>
<g transform="translate(553.2 507.4) scale(0.95)"><path d="M-1.6,-5.5 h3.2 v2 h-3.2z" fill="#2a2a1a" /><path d="M-3.2,-3.5 h6.4 l0.8,8 h-8z" fill="#e0c830" stroke="#3a3000" stroke-width="0.7" /><path d="M-1.2,-2.5 v6" fill="none" stroke="#f8f0a0" stroke-width="0.9" /></g>
<g transform="translate(580.0 507.4) scale(0.95)"><circle cx="0.0" cy="0.0" r="5.0" fill="#dcdce8" stroke="#c0c0d0" stroke-width=".6"/><path d="M0,-3.2 a3.2,3.2 0 1 0 3.2,3.2 a1.8,1.8 0 1 0 -1.8,1.8" fill="none" stroke="#bcbccc" stroke-width="1.1" /></g>
<g transform="translate(595.5 507.4) scale(0.95)"><circle cx="0.0" cy="0.0" r="5.6" fill="#2a6ad8" stroke="#0a1a5a" stroke-width=".8"/><path d="M-4,-3 c2,1 3,-1 4,-2.5 M-5,1.5 c2,-1 3,1 4,3.5" fill="none" stroke="#d8ecff" stroke-width="1" /><path d="M0,-1.5 v5.5 h4.5 v-3.5 l-1.2,-1 l-1.2,0.6 l-1,-1.6z" fill="#fdf4e8" stroke="#2a1a0a" stroke-width="0.6" /></g>
<g transform="translate(610.0 507.4) scale(0.95)"><path d="M-2,3 V-5.5 M-2,3 L-6,5.5 M-2,3 L6,3.5" fill="none" stroke="#1a1a1a" stroke-width="1" /><path d="M-2,-5.5 l-1,1.5 h2z" fill="#1a1a1a" /><circle cx="-2.0" cy="3.0" r="1.0" fill="#e03a2a" /></g>
<g transform="translate(626.4 507.4) scale(0.95)"><path d="M-6,-3.5 h4 l1.5,1.5 h6 M-6,0.5 h3 l1.5,1.2 h5 M-4,4.2 h8 M-2,-4.5 h7" fill="none" stroke="#2a70e0" stroke-width="1.2" /><circle cx="1.0" cy="-2.0" r="1.0" fill="#7ac0ff" /><circle cx="-1.0" cy="1.7" r="1.0" fill="#7ac0ff" /></g>
<g transform="translate(641.4 507.4) scale(0.95)"><path d="M-5.5,-4h11M-5.5,-1.3h11M-5.5,1.3h11M-5.5,4h11M-4,-5.5v11M-1.3,-5.5v11M1.3,-5.5v11M4,-5.5v11" fill="none" stroke="#2a5ae0" stroke-width="1.1" /></g>
<g transform="translate(657.6 507.4) scale(0.95)"><path d="M-4.5,-3 L-2,-5.5 L5,-5.5 L5,3 L2.5,5.5 L-4.5,5.5z" fill="#2ac8d8" stroke="#0a2a3a" stroke-width="0.8" /><path d="M-4.5,-3 H2.5 V5.5 M2.5,-3 L5,-5.5" fill="none" stroke="#0a2a3a" stroke-width="0.7" /><rect x="-3.5" y="-2.0" width="5.0" height="6.5" fill="#7ae8f0" /></g>
<g transform="translate(673.6 507.4) scale(0.95)"><path d="M-4.5,-2.5 L-2,-5 L5,-5 L5,2.5 L2.5,5 L-4.5,5z" fill="#38c0c8" stroke="#0a1a2a" stroke-width="0.9" /><path d="M-4.5,-2.5 H2.5 V5 M2.5,-2.5 L5,-5" fill="none" stroke="#0a1a2a" stroke-width="0.8" /><rect x="-3.2" y="-1.2" width="4.4" height="5.0" fill="#68dce8" /></g>
<g transform="translate(688.4 507.4) scale(0.95)"><path d="M-5.5,-3.5 h5 l3,5" fill="none" stroke="#1a3ac8" stroke-width="1.3" /><path d="M-3,-5 L1,0 M1,-5 L-3,0" fill="none" stroke="#1a3ac8" stroke-width="1" /><path d="M-1,5 L5.5,0.5" fill="none" stroke="#e02a1a" stroke-width="1.6" /><path d="M0,1 l4,3" fill="none" stroke="#e02a1a" stroke-width="1.2" /></g>
<g transform="translate(705.9 507.4) scale(0.95)"><path d="M-5,-3.5 h7 M-5,0 h9 M-5,3.5 h7" fill="none" stroke="#f0f0e8" stroke-width="2.2" /><path d="M-5,-3.5 h7 M-5,0 h9 M-5,3.5 h7" fill="none" stroke="#c8c8c0" stroke-width="0.5" /></g>
<path d="M129.0,513.3 h4 l-2,2.2z" fill="#111" />
<path d="M146.0,513.3 h4 l-2,2.2z" fill="#111" />
<path d="M229.0,513.3 h4 l-2,2.2z" fill="#111" />
<path d="M261.0,513.3 h4 l-2,2.2z" fill="#111" />
<path d="M427.0,513.3 h4 l-2,2.2z" fill="#111" />
<path d="M443.0,513.3 h4 l-2,2.2z" fill="#111" />
<path d="M645.0,513.3 h4 l-2,2.2z" fill="#111" />
<path d="M661.0,513.3 h4 l-2,2.2z" fill="#111" />
<rect x="170.0" y="500.0" width="1.0" height="13.0" fill="#a8a8c0" /><rect x="171.0" y="500.0" width="1.0" height="13.0" fill="#f8f8ff" />
<rect x="287.0" y="500.0" width="1.0" height="13.0" fill="#a8a8c0" /><rect x="288.0" y="500.0" width="1.0" height="13.0" fill="#f8f8ff" />
<rect x="483.0" y="500.0" width="1.0" height="13.0" fill="#a8a8c0" /><rect x="484.0" y="500.0" width="1.0" height="13.0" fill="#f8f8ff" />
<rect x="510.0" y="500.0" width="1.0" height="13.0" fill="#a8a8c0" /><rect x="511.0" y="500.0" width="1.0" height="13.0" fill="#f8f8ff" />
<rect x="567.0" y="500.0" width="1.0" height="13.0" fill="#a8a8c0" /><rect x="568.0" y="500.0" width="1.0" height="13.0" fill="#f8f8ff" />
<text x="727" y="511" font-family="Liberation Serif,serif" font-size="13.5" font-style="italic" fill="#3a3a9e">D</text><text x="735.5" y="508.5" font-family="Liberation Serif,serif" font-size="13" font-style="italic" font-weight="bold" fill="#f08a1c">S</text><text x="734" y="501.5" font-family="Liberation Sans,sans-serif" font-size="6" font-style="italic" font-weight="bold" fill="#e02a2a">3</text><text x="731.5" y="514" font-family="Liberation Sans,sans-serif" font-size="5" font-style="italic" font-weight="bold" fill="#2a2a8a" textLength="17" lengthAdjust="spacingAndGlyphs">CATIA</text>
<path d="M4,148.5 C5,144 9,141.5 12.5,142.5" fill="none" stroke="#2a78e8" stroke-width="2" /><path d="M6.5,149 C7.5,145.5 10,143.5 12.5,144.5" fill="none" stroke="#f08a1c" stroke-width="2.2" /><circle cx="10.5" cy="146.0" r="1.6" fill="#ffd040" />
<g transform="translate(123.3 189.7) scale(1)"><circle cx="0.0" cy="0.0" r="1.3" fill="#1a3ab8" /></g>
<path d="M128.5,196.0 h4 l-2,2.2z" fill="#111" />
<g transform="translate(141.0 190.5) scale(0.9)"><path d="M-4.5,4.5 L4.5,-4.5" fill="none" stroke="#1a2a6a" stroke-width="1.1" /></g>
<path d="M145.0,196.0 h4 l-2,2.2z" fill="#111" />
<g transform="translate(307.0 189.5) scale(1)"><path d="M-5,1 L0,-5 L5,-2 L1,5z" fill="#38b8e8" stroke="#0a2a6a" stroke-width="0.6" /></g>
<g transform="translate(322.0 189.5) scale(0.95)"><path d="M-6,3 C-5,-5 5,-5 6,3 C3,0.5 -3,0.5 -6,3z" fill="#38c8e8" stroke="#0a2a6a" stroke-width="0.7" /><path d="M-3.5,1 L0,-2.5 L3.5,1 C1.5,0 -1.5,0 -3.5,1z" fill="#f0b838" stroke="#6a4a0a" stroke-width="0.5" /><path d="M-6,3 C-3,5.5 3,5.5 6,3" fill="none" stroke="#38c8e8" stroke-width="1.6" /></g>
<g transform="translate(337.4 189.5) scale(0.95)"><path d="M-5.5,1 C-4.5,-5.5 4.5,-5.5 5.5,1" fill="none" stroke="#e8d838" stroke-width="1.8" /><path d="M-4,3.5 C-3,-2.5 3,-2.5 4,3.5 C2,1.5 -2,1.5 -4,3.5z" fill="#38c8e8" stroke="#0a2a6a" stroke-width="0.6" /><path d="M-5.5,1 L-6,5 M5.5,1 L6,5" fill="none" stroke="#1a1a1a" stroke-width="0.8" /></g>
<g transform="translate(353.0 189.5) scale(0.95)"><path d="M-6,-2 L2,-5.5 L6,-3.5 L-2,0z" fill="#38c0e8" stroke="#0a2a6a" stroke-width="0.5" /><path d="M-6,1 L2,-2.5 L6,-0.5 L-2,3z" fill="#f0e040" stroke="#5a5a10" stroke-width="0.5" /><path d="M-6,4 L2,0.5 L6,2.5 L-2,6z" fill="#38c0e8" stroke="#0a2a6a" stroke-width="0.5" /></g>
<path d="M310.0,196.0 h4 l-2,2.2z" fill="#111" />
<g transform="translate(379.5 189.3) scale(0.95)"><rect x="-5.5" y="-5.5" width="11.0" height="11.0" fill="#2a4a9a" stroke="#0a1a4a" stroke-width=".6"/><rect x="-4.5" y="-4.5" width="4.0" height="4.0" fill="#48c8f0" /><rect x="0.5" y="-4.5" width="4.0" height="4.0" fill="#3aa0e8" /><rect x="-4.5" y="0.5" width="4.0" height="4.0" fill="#3aa0e8" /><rect x="0.5" y="0.5" width="4.0" height="4.0" fill="#48c8f0" /></g>
<g transform="translate(396.2 189.3) scale(0.95)"><path d="M-6,-4.5 L0,-1 L-2.5,3.5z" fill="#2a70e0" stroke="#0a1a6a" stroke-width="0.5" /><path d="M0,-5 L6,-3 L1,2z" fill="#e8e048" stroke="#4a4a10" stroke-width="0.5" /><path d="M-1.5,0 L5,4.5 L1.5,5.5z" fill="#38c8e8" stroke="#0a2a6a" stroke-width="0.5" /><path d="M-5,-5.5 L4,5" fill="none" stroke="#1a1a6a" stroke-width="0.8" /></g>
<g transform="translate(412.7 189.3) scale(0.95)"><path d="M-5,-2.5 L-1,-5.5 L5,-3.5 L5,2.5 L1,5.5 L-5,3.5z" fill="#e8f8ff" stroke="#1a1a1a" stroke-width="0.8" /><path d="M-5,-2.5 L1,-0.5 L1,5.5 M1,-0.5 L5,-3.5" fill="none" stroke="#1a1a1a" stroke-width="0.7" /><path d="M-3.5,-0.5 L0,0.7 V4 L-3.5,2.8z" fill="#38c0d8" /><path d="M1.5,2 L6,6" fill="none" stroke="#e87828" stroke-width="1.4" /></g>
<g transform="translate(430.2 189.3) scale(0.95)"><path d="M-5.5,-3.5 C0,-5.5 4.5,-2 4.5,4.5 L1,5 C1,0.5 -1.5,-1.5 -5,-0.5z" fill="#38b8d8" stroke="#0a2a5a" stroke-width="0.6" /><path d="M-0.5,-3.8 C2.5,-2.5 4.3,0 4.5,4.5 L1,5 C0.8,1.5 -0.5,-0.5 -2.5,-1.2z" fill="#f4e8a8" stroke="#6a5a1a" stroke-width="0.5" /></g>
<g transform="translate(446.1 189.3) scale(0.95)"><path d="M-5.5,-1.5 L-2.5,-5 L-2.5,3 L-5.5,5.5z" fill="#58d0e8" stroke="#0a2a6a" stroke-width="0.5" /><path d="M1,-1.5 L4,-5 L4,3 L1,5.5z" fill="#58d0e8" stroke="#0a2a6a" stroke-width="0.5" /><path d="M-1.5,-3.5 V5 M5.5,-3.5 V5" fill="none" stroke="#1a2a6a" stroke-width="0.8" /><path d="M-2.5,1 h3.5" fill="none" stroke="#1a1a1a" stroke-width="0.7" /></g>
<g transform="translate(462.8 189.3) scale(0.95)"><path d="M-6,3 C-4,-1 0,-4 3.5,-5 L6,-1.5 C2.5,-0.5 -1,2 -3,6z" fill="#38b0e0" stroke="#0a2a6a" stroke-width="0.6" /><path d="M-0.5,-3.3 L3.5,-5 L6,-1.5 L2.2,0z" fill="#f0e840" stroke="#1a1a1a" stroke-width="0.6" /><path d="M-4,1.5 L-1.2,3.6" fill="none" stroke="#e8f8ff" stroke-width="0.8" /></g>
<path d="M384.0,196.0 h4 l-2,2.2z" fill="#111" />
<path d="M401.0,196.0 h4 l-2,2.2z" fill="#111" />
<path d="M417.5,196.0 h4 l-2,2.2z" fill="#111" />
<path d="M434.0,196.0 h4 l-2,2.2z" fill="#111" />
<path d="M450.5,196.0 h4 l-2,2.2z" fill="#111" />
<g transform="translate(486.5 189.5) scale(0.95)"><path d="M-5.5,5.5 V-5.5 M-5.5,5.5 H6" fill="none" stroke="#1a1a3a" stroke-width="0.9" /><path d="M-5.5,5.5 C-2,-6 2,-6 5.5,5" fill="none" stroke="#3a50d8" stroke-width="1" /><path d="M-5.5,5.5 L5.5,-4.5" fill="none" stroke="#e8e040" stroke-width="1" /></g>
<path d="M27.7,236 V320 H34.5 M27.7,247.3 H34.5 M27.7,261.7 H34.5 M27.7,276.2 H34.5 M27.7,291.3 H35 M27.7,305.8 H35" fill="none" stroke="#e8e8f8" stroke-width="1" />
<g transform="translate(29.0 231.0) scale(1)"><path d="M0.5,-6 h4 l2,2 v7 h-6z" fill="#f8fbff" stroke="#3a70d8" stroke-width="0.8" /><path d="M4.5,-6 v2 h2" fill="#3a70d8" /><circle cx="-2.5" cy="1.5" r="3.0" fill="#e8d020" stroke="#8a7a10" stroke-width=".6"/><circle cx="-2.5" cy="1.5" r="1.1" fill="#33336b" /><path d="M-2.5,-2.5v1M-2.5,4.5v1M-6.5,1.5h1M0.5,1.5h1M-5.3,-1.3l.8,.8M0.3,4.3l-.8,-.8M-5.3,4.3l.8,-.8M0.3,-1.3l-.8,.8" fill="none" stroke="#e8d020" stroke-width="1.2" /></g>
<g transform="translate(41.0 246.6) scale(1)"><rect x="-5.8" y="-5.2" width="11.6" height="10.4" fill="#8686a0" /><path d="M-3.5,1.2 L-0.5,-1.2 L4,-1.2 L1.5,1.2z" fill="#c8b838" stroke="#5a5a2a" stroke-width="0.4" /><path d="M-4,2.5 h6" fill="none" stroke="#6a6a84" stroke-width="0.8" /></g>
<g transform="translate(41.0 261.0) scale(1)"><rect x="-5.8" y="-5.2" width="11.6" height="10.4" fill="#8686a0" /><path d="M-3.5,1.2 L-0.5,-1.2 L4,-1.2 L1.5,1.2z" fill="#c8b838" stroke="#5a5a2a" stroke-width="0.4" /><path d="M-4,2.5 h6" fill="none" stroke="#6a6a84" stroke-width="0.8" /></g>
<g transform="translate(41.0 275.5) scale(1)"><rect x="-5.8" y="-5.2" width="11.6" height="10.4" fill="#8686a0" /><path d="M-3.5,1.2 L-0.5,-1.2 L4,-1.2 L1.5,1.2z" fill="#c8b838" stroke="#5a5a2a" stroke-width="0.4" /><path d="M-4,2.5 h6" fill="none" stroke="#6a6a84" stroke-width="0.8" /></g>
<g transform="translate(27.7 291.3) scale(1)"><circle cx="0.0" cy="0.0" r="3.2" fill="#0c0c10" /><path d="M-3.4,0 h6.8 M0,-3.4 v6.8" fill="none" stroke="#f0f0ff" stroke-width="0.8" /></g>
<g transform="translate(27.7 305.8) scale(1)"><circle cx="0.0" cy="0.0" r="3.2" fill="#0c0c10" /><path d="M-3.4,0 h6.8 M0,-3.4 v6.8" fill="none" stroke="#f0f0ff" stroke-width="0.8" /></g>
<g transform="translate(41.5 291.3) scale(0.95)"><circle cx="0.0" cy="0.0" r="4.4" fill="#28b878" stroke="#e8fff0" stroke-width=".5"/><path d="M0,-6 v12 M-6,0 h12 M-4.2,-4.2 l8.4,8.4 M4.2,-4.2 l-8.4,8.4" fill="none" stroke="#30d080" stroke-width="1.5" /><circle cx="0.0" cy="0.0" r="2.2" fill="#2a60d8" /><circle cx="0.0" cy="0.0" r="1.0" fill="#b8e8ff" /></g>
<g transform="translate(41.5 305.3) scale(0.9)"><path d="M-4.5,-3 C-4.5,-6.5 1,-6.5 1.5,-3.5 C4,-5 5.5,-2 3.5,0 C5.5,2 2,4 0,2.5 C-2,4.5 -6,2 -4.5,-3z" fill="#f4c838" stroke="#a85a10" stroke-width="0.6" /><path d="M-2.5,-2 C-1,-4 1,-3 0,-1 C2,-1 2,1.5 -0.5,1" fill="none" stroke="#e86820" stroke-width="1" /><path d="M-5.5,4.5 C-3,6.5 3,6.5 5.5,4" fill="none" stroke="#3a80e8" stroke-width="1.5" /><path d="M-3,3.5 h6 v2 h-6z" fill="#f0d838" /></g>
<g transform="translate(41.5 319.5) scale(0.9)"><path d="M-4.5,-3 C-4.5,-6.5 1,-6.5 1.5,-3.5 C4,-5 5.5,-2 3.5,0 C5.5,2 2,4 0,2.5 C-2,4.5 -6,2 -4.5,-3z" fill="#f4c838" stroke="#a85a10" stroke-width="0.6" /><path d="M-2.5,-2 C-1,-4 1,-3 0,-1 C2,-1 2,1.5 -0.5,1" fill="none" stroke="#e86820" stroke-width="1" /><path d="M-5.5,4.5 C-3,6.5 3,6.5 5.5,4" fill="none" stroke="#3a80e8" stroke-width="1.5" /><path d="M-3,3.5 h6 v2 h-6z" fill="#f0d838" /></g>
<path d="M667.4,217 L650.6,230.8 C651,243 660,251.5 673.2,251.2 C683,250.5 689.5,244 688.2,236.6z" fill="#2a5f80" stroke="#dccdf4" stroke-width="1.3" />
<path d="M690.5,208.9 L674.9,223.9 L697.4,240.7 C702.5,231 699.5,217 690.5,208.9z" fill="#2a5f80" stroke="#dccdf4" stroke-width="1.3" />
<path d="M662.7,234.9 L692,205.2 M664.5,235.3 L692.6,206.6" fill="none" stroke="#f4f0ff" stroke-width="0.9" />
<circle cx="692.8" cy="204.8" r="2.2" fill="#e4d8f8" />
<rect x="667.0" y="230.9" width="5.0" height="5.0" fill="#e01818" />
<text x="664.0" y="243.0" font-family="Liberation Sans,sans-serif" font-size="8" fill="#9ab02a">x</text><text x="696.5" y="247.5" font-family="Liberation Sans,sans-serif" font-size="8" fill="#d8c030">y</text><text x="693.8" y="212.5" font-family="Liberation Sans,sans-serif" font-size="8" fill="#d8c030">z</text>
<path d="M714.3,481.4 L720.3,472.6 M714.3,481.4 L708.8,485.8 M714.3,481.4 L724.3,490.2" fill="none" stroke="#cfcfe6" stroke-width="1" />
<text x="720.4" y="474.2" font-family="Liberation Sans,sans-serif" font-size="6.5" fill="#cfcfe6">z</text><text x="705.3" y="489.2" font-family="Liberation Sans,sans-serif" font-size="6.5" fill="#cfcfe6">x</text><text x="723.6" y="491.2" font-family="Liberation Sans,sans-serif" font-size="6.5" fill="#cfcfe6">y</text>
<g transform="translate(377.4 281.4) scale(0.9)"><path d="M-8.5,0 H-2.5 M2.5,0 H8.5 M0,-8.5 V-2.5 M0,2.5 V7" fill="none" stroke="#000" stroke-width="1.3" /><path d="M-9.5,0 l3,-2.6 v5.2z M9.5,0 l-3,-2.6 v5.2z M0,-9.5 l-2.6,3 h5.2z M0,8 l-2.6,-2.6 h5.2z" fill="#000" /></g>
<g transform="translate(377.5 281.5) scale(0.86)"><path d="M0,0 V16 L3.8,12.4 L6.8,19.2 L9.2,18.2 L6.2,11.6 H11.4z" fill="#fff" stroke="#000" stroke-width="1.1" /></g>
</svg>
<div class="abs" id="menu"></div>
<div class="abs" id="mhl"></div>
<div class="abs msep" style="top:205.5px"></div>
<div class="abs msep" style="top:224.5px"></div>
<div class="abs msep" style="top:242.5px"></div>
<div class="abs msep" style="top:313.0px"></div>
<div class="abs msep" style="top:370.2px"></div>
<div class="abs msep" style="top:454.0px"></div>
<div class="abs t mt dis" style="top:150.8px">Object</div>
<div class="abs t mt " style="top:164.9px"><u>B</u>ody</div>
<div class="abs t mt hl" style="top:178.2px"><u>G</u>eometrical Set...</div>
<div class="abs t mt " style="top:191.5px">O<u>r</u>dered Geometrical Set...</div>
<div class="abs t mt " style="top:209.0px"><u>S</u>ketcher</div>
<div class="abs marr" style="top:213.0px"></div>
<div class="abs t mt " style="top:227.9px"><u>A</u>xis System...</div>
<div class="abs t mt " style="top:245.3px"><u>W</u>ireframe</div>
<div class="abs marr" style="top:249.3px"></div>
<div class="abs t mt " style="top:258.7px"><u>L</u>aw</div>
<div class="abs marr" style="top:262.7px"></div>
<div class="abs t mt " style="top:271.7px">S<u>u</u>rfaces</div>
<div class="abs marr" style="top:275.7px"></div>
<div class="abs t mt " style="top:284.8px"><u>V</u>olumes</div>
<div class="abs marr" style="top:288.8px"></div>
<div class="abs t mt " style="top:297.9px">O<u>p</u>erations</div>
<div class="abs marr" style="top:301.9px"></div>
<div class="abs t mt " style="top:316.0px"><u>C</u>onstraints</div>
<div class="abs marr" style="top:320.0px"></div>
<div class="abs t mt " style="top:329.1px">A<u>n</u>notations</div>
<div class="abs marr" style="top:333.1px"></div>
<div class="abs t mt " style="top:342.5px">V<u>i</u>ews/Annotation Planes</div>
<div class="abs marr" style="top:346.5px"></div>
<div class="abs t mt " style="top:355.6px">Anal<u>y</u>sis</div>
<div class="abs marr" style="top:359.6px"></div>
<div class="abs t mt " style="top:373.8px">A<u>d</u>vanced Replication Tools</div>
<div class="abs marr" style="top:377.8px"></div>
<div class="abs t mt " style="top:386.8px"><u>K</u>nowledge Templates</div>
<div class="abs marr" style="top:390.8px"></div>
<div class="abs t mt " style="top:400.2px">Instan<u>t</u>iate From Document...</div>
<div class="abs t mt " style="top:413.3px">Instantiat<u>e</u> From Selection...</div>
<div class="abs t mt " style="top:426.4px">Advanced Sur<u>f</u>aces</div>
<div class="abs marr" style="top:430.4px"></div>
<div class="abs t mt " style="top:439.5px">Developed S<u>h</u>apes</div>
<div class="abs marr" style="top:443.5px"></div>
<div class="abs t mt " style="top:457.3px">BiW Te<u>m</u>plates</div>
<div class="abs marr" style="top:461.3px"></div>
<div class="abs t tr" style="left:37.8px;top:226.5px">Exercise EX01</div>
<div class="abs t tr" style="top:241.3px">xy plane</div>
<div class="abs t tr" style="top:255.7px">yz plane</div>
<div class="abs t tr" style="top:270.2px">zx plane</div>
<div class="abs t tr" style="top:285.3px">PartBody</div>
<div class="abs t tr" style="top:299.8px">Geometrical Set.1</div>
<div class="abs t tr" style="top:314px"><u>Operation Body</u></div>
<div class="abs num" style="left:139.5px;top:168.2px">1</div>
<div class="abs num" style="left:117.1px;top:307px">2</div>
<svg class="abs" id="gfx2" style="left:0;top:0" width="755" height="562" viewBox="0 0 755 562">
<g transform="translate(180.2 171.6) scale(0.9)"><circle cx="-0.5" cy="0.0" r="5.4" fill="#20a060" stroke="#0a3a2a" stroke-width=".5"/><path d="M-0.5,-6.5 v13 M-7,0 h13 M-5,-4.6 l9,9.2 M4,-4.6 l-9,9.2" fill="none" stroke="#28c070" stroke-width="1.6" /><circle cx="-1.5" cy="-1.0" r="2.2" fill="#2a60e0" stroke="#a8e0ff" stroke-width=".7"/><circle cx="2.5" cy="3.0" r="2.0" fill="#2a50d0" stroke="#a8d8ff" stroke-width=".6"/></g>
<g transform="translate(180.0 185.0) scale(0.9)"><path d="M-4.5,-3 C-4.5,-6.5 1,-6.5 1.5,-3.5 C4,-5 5.5,-2 3.5,0 C5.5,2 2,4 0,2.5 C-2,4.5 -6,2 -4.5,-3z" fill="#f4c838" stroke="#a85a10" stroke-width="0.6" /><path d="M-2.5,-2 C-1,-4 1,-3 0,-1 C2,-1 2,1.5 -0.5,1" fill="none" stroke="#e86820" stroke-width="1" /><path d="M-5.5,4.5 C-3,6.5 3,6.5 5.5,4" fill="none" stroke="#3a80e8" stroke-width="1.5" /><path d="M-3,3.5 h6 v2 h-6z" fill="#f0d838" /></g>
<g transform="translate(180.0 198.2) scale(0.9)"><rect x="-4.5" y="-5.5" width="8.0" height="8.5" fill="#58c068" stroke="#1a4a8a" stroke-width=".9" rx="1.5"/><rect x="-2.8" y="-3.8" width="4.6" height="4.4" fill="#b8ecc0" /><path d="M-5.5,4.5 C-3,6.5 3,6.5 5.5,4" fill="none" stroke="#2a70e0" stroke-width="1.6" /><path d="M-5.5,-5.5 v10" fill="none" stroke="#98e040" stroke-width="1.2" /><path d="M4.5,-4.5 l1.5,-1.5" fill="none" stroke="#2a60d8" stroke-width="0.9" /></g>
<g transform="translate(181.0 233.8) scale(0.85)"><path d="M-3,3.5 V-6 M-3,3.5 H6 M-3,3.5 L-6.5,6.5" fill="none" stroke="#1a1a1a" stroke-width="1" /><path d="M-3,-6.5 l-1.2,2 h2.4z M6.5,3.5 l-2,-1.2 v2.4z" fill="#1a1a1a" /></g>
<g transform="translate(180.5 406.5) scale(0.85)"><path d="M-6,-5 h4.5 l1,1 h3 v3.5 h-8.5z" fill="#f0d030" stroke="#6a5a0a" stroke-width="0.5" /><path d="M1,-3.5 L5.5,1" fill="none" stroke="#1a3ac8" stroke-width="1.1" /><path d="M5.8,1.5 l-2.5,-0.5 l2,-2z" fill="#1a3ac8" /><path d="M-6,3.5 L-2,1 L5,2 L1,5.5z" fill="#f0e048" stroke="#6a6a10" stroke-width="0.5" /><path d="M-6,3.5 V5.5 L1,7 L5,3.8 V2" fill="none" stroke="#2a60d8" stroke-width="0.9" /></g>
<g transform="translate(180.5 419.6) scale(0.85)"><path d="M-6,-5 h4.5 l1,1 h3 v3.5 h-8.5z" fill="#f0d030" stroke="#6a5a0a" stroke-width="0.5" /><path d="M1,-3.5 L5.5,1" fill="none" stroke="#1a3ac8" stroke-width="1.1" /><path d="M5.8,1.5 l-2.5,-0.5 l2,-2z" fill="#1a3ac8" /><path d="M-6,3.5 L-2,1 L5,2 L1,5.5z" fill="#f0e048" stroke="#6a6a10" stroke-width="0.5" /><path d="M-6,3.5 V5.5 L1,7 L5,3.8 V2" fill="none" stroke="#2a60d8" stroke-width="0.9" /></g>
<g transform="translate(250.3 184.4) scale(0.56)"><path d="M0,0 V16 L3.8,12.4 L6.8,19.2 L9.2,18.2 L6.2,11.6 H11.4z" fill="#fff" stroke="#000" stroke-width="1.1" /></g>
</svg>
</body>
</html>
